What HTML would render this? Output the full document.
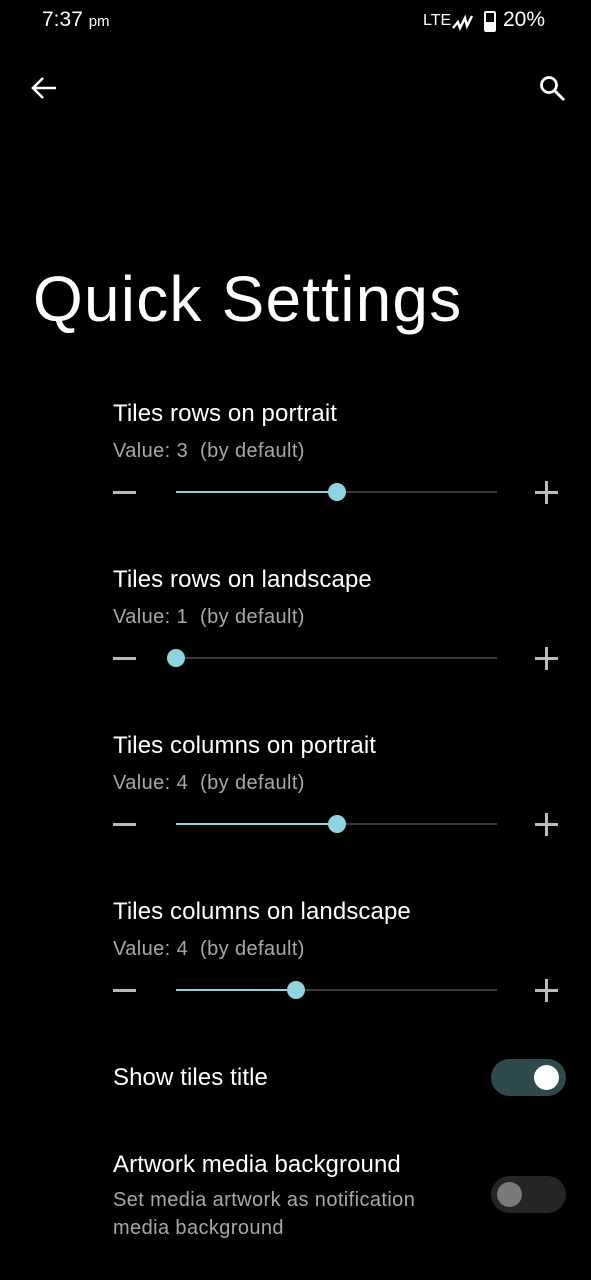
<!DOCTYPE html>
<html><head><meta charset="utf-8"><style>
body{margin:0;width:591px;height:1280px;background:#000;position:relative;overflow:hidden;font-family:"Liberation Sans",sans-serif;color:#fff}
.a{position:absolute;white-space:nowrap}
.t{font-size:24px;color:#fff;letter-spacing:0.1px}
.v{font-size:20px;color:#a8a8a8;letter-spacing:0.4px}
.tr{position:absolute;left:176px;width:321px;height:2px;background:#3a3a3a}
.fi{position:absolute;left:0;top:0;height:2px;background:#8fd3e0}
.th{position:absolute;top:-8px;width:18px;height:18px;margin-left:-9px;border-radius:50%;background:#8fd3e0}
.mi{position:absolute;left:113px;width:23px;height:3px;background:#bbb}
.pl{position:absolute;left:535px;width:23px;height:23px}
.pl:before{content:"";position:absolute;left:0;top:10px;width:23px;height:3px;background:#bbb}
.pl:after{content:"";position:absolute;left:10px;top:0;width:3px;height:23px;background:#bbb}
</style></head><body>
<div class="a" style="left:42px;top:8px;font-size:21px">7:37 <span style="font-size:15px">pm</span></div>
<div class="a" style="left:423px;top:12px;font-size:16px">LTE</div>
<svg class="a" style="left:452px;top:14px" width="22" height="18" viewBox="0 0 22 18"><path d="M1 14 L6 8 L8 14 L13 4 L15 12 L20 2" stroke="#fff" stroke-width="2.4" fill="none"/></svg>
<div class="a" style="left:484px;top:11px;width:8px;height:17px;border:2px solid #fff;border-radius:2px"></div>
<div class="a" style="left:486px;top:22px;width:8px;height:8px;background:#fff"></div>
<div class="a" style="left:503px;top:8px;font-size:21px">20%</div>
<svg class="a" style="left:30px;top:75px" width="28" height="26" viewBox="0 0 28 26"><path d="M26 13H4M13 3 L3 13 L13 23" stroke="#fff" stroke-width="2.6" fill="none"/></svg>
<svg class="a" style="left:538px;top:74px" width="30" height="30" viewBox="0 0 30 30"><circle cx="11" cy="11" r="7.5" stroke="#fff" stroke-width="2.8" fill="none"/><path d="M16.5 16.5 L26 26" stroke="#fff" stroke-width="3"/></svg>
<div class="a" style="left:33px;top:262px;font-size:64px;letter-spacing:1.2px">Quick Settings</div>

<div class="a t" style="left:113px;top:400px">Tiles rows on portrait</div>
<div class="a v" style="left:113px;top:440px">Value: 3&nbsp; (by default)</div>
<div class="mi" style="top:491px"></div><div class="tr" style="top:491px"><div class="fi" style="width:161px"></div><div class="th" style="left:161px"></div></div><div class="pl" style="top:481px"></div>

<div class="a t" style="left:113px;top:566px">Tiles rows on landscape</div>
<div class="a v" style="left:113px;top:606px">Value: 1&nbsp; (by default)</div>
<div class="mi" style="top:657px"></div><div class="tr" style="top:657px"><div class="th" style="left:0"></div></div><div class="pl" style="top:647px"></div>

<div class="a t" style="left:113px;top:732px">Tiles columns on portrait</div>
<div class="a v" style="left:113px;top:772px">Value: 4&nbsp; (by default)</div>
<div class="mi" style="top:823px"></div><div class="tr" style="top:823px"><div class="fi" style="width:161px"></div><div class="th" style="left:161px"></div></div><div class="pl" style="top:813px"></div>

<div class="a t" style="left:113px;top:898px">Tiles columns on landscape</div>
<div class="a v" style="left:113px;top:938px">Value: 4&nbsp; (by default)</div>
<div class="mi" style="top:989px"></div><div class="tr" style="top:989px"><div class="fi" style="width:120px"></div><div class="th" style="left:120px"></div></div><div class="pl" style="top:979px"></div>

<div class="a t" style="left:113px;top:1064px">Show tiles title</div>
<div class="a" style="left:491px;top:1059px;width:75px;height:37px;border-radius:19px;background:#2e4a4e"></div>
<div class="a" style="left:534px;top:1065px;width:25px;height:25px;border-radius:50%;background:#fff"></div>

<div class="a t" style="left:113px;top:1151px">Artwork media background</div>
<div class="a v" style="left:113px;top:1186px;line-height:28px;white-space:normal;width:340px">Set media artwork as notification media background</div>
<div class="a" style="left:491px;top:1176px;width:75px;height:37px;border-radius:19px;background:#252525"></div>
<div class="a" style="left:497px;top:1182px;width:25px;height:25px;border-radius:50%;background:#7a7a7a"></div>
</body></html>
